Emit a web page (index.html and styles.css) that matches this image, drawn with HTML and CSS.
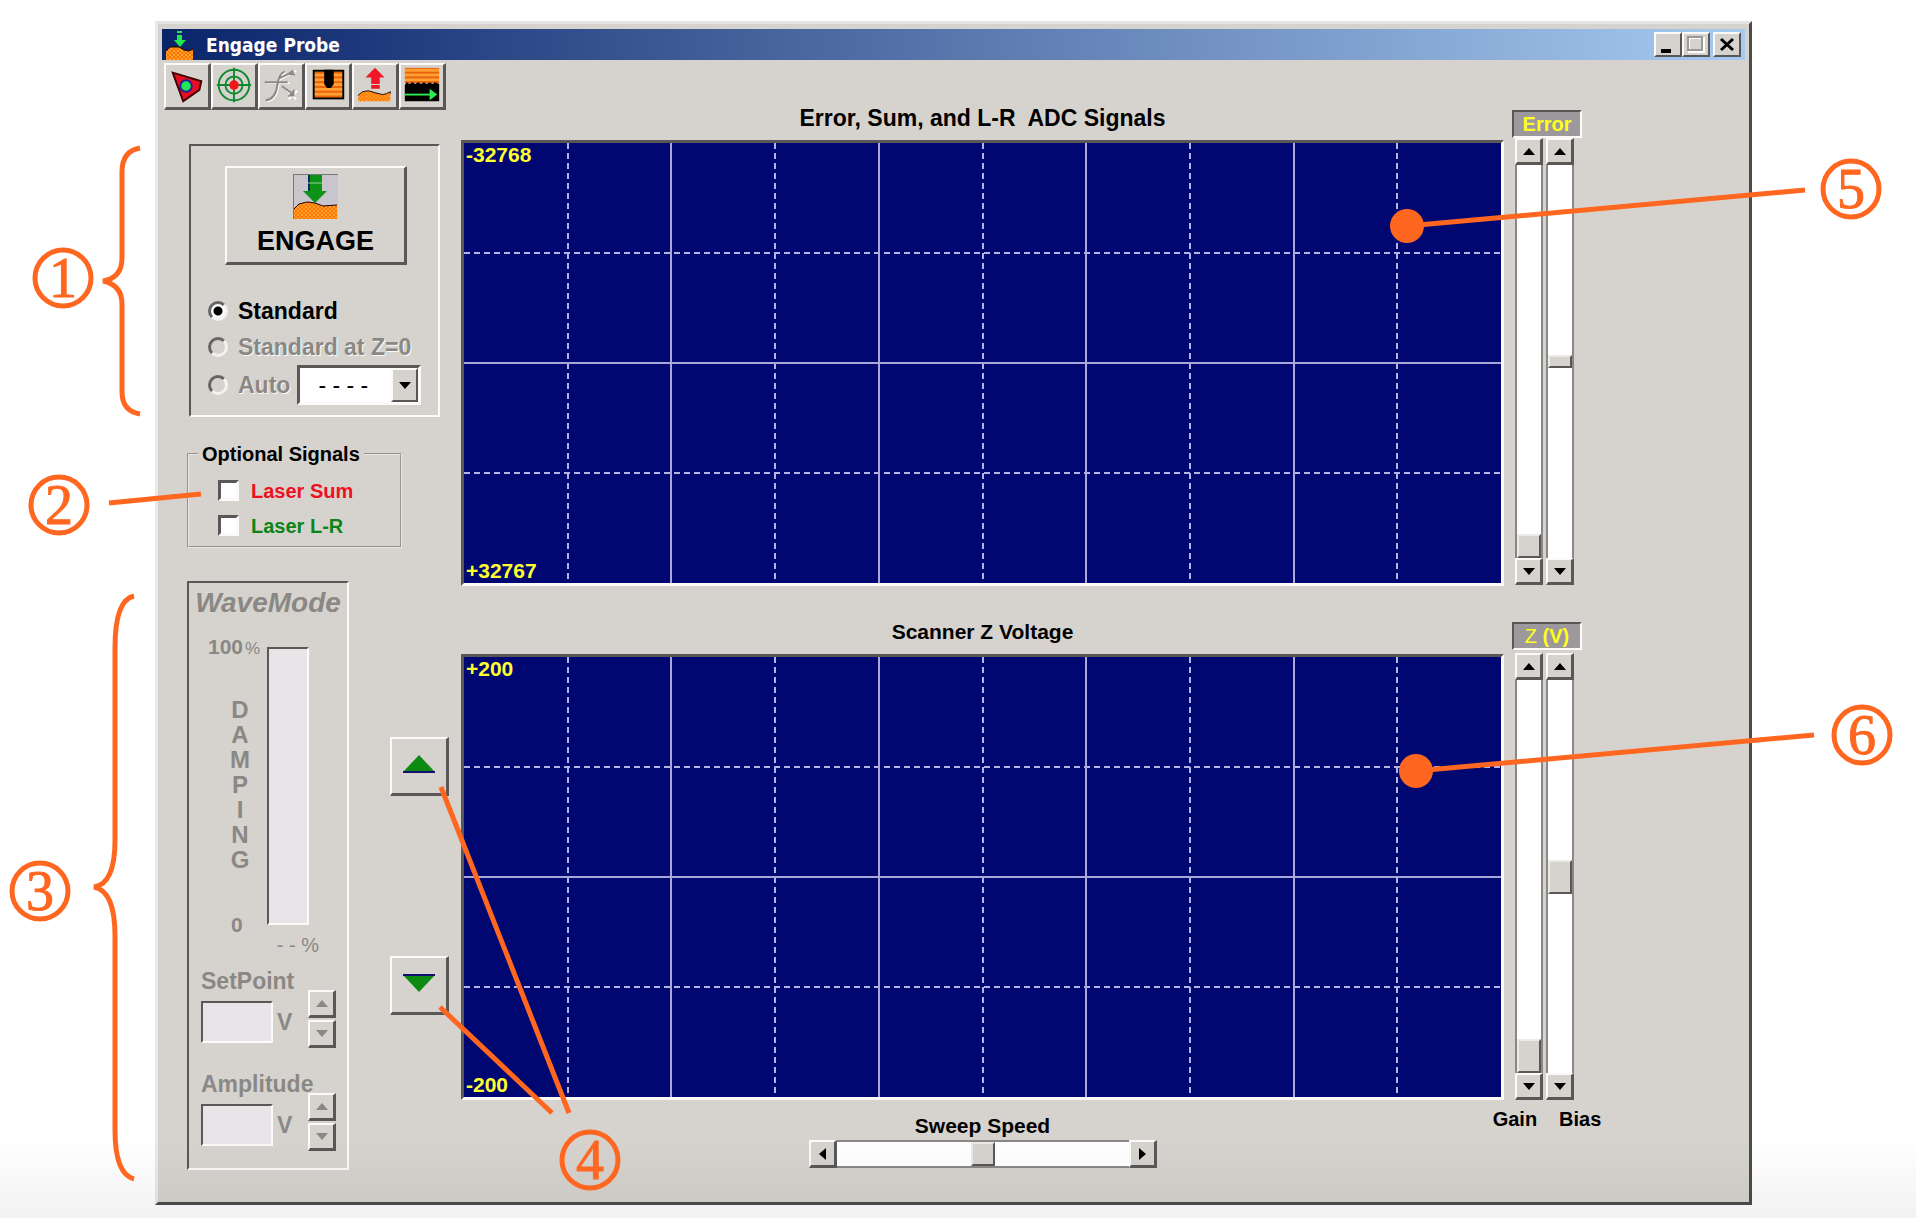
FILE: index.html
```html
<!DOCTYPE html>
<html lang="en">
<head>
<meta charset="utf-8">
<title>Engage Probe</title>
<link rel="stylesheet" href="styles.css">
</head>
<body>
<svg class="defs" aria-hidden="true">
  <defs>
    <pattern id="sand" width="4" height="4" patternUnits="userSpaceOnUse">
      <rect width="4" height="4" fill="#ff7408"/><rect width="2" height="2" fill="#ffa828"/><rect x="2" y="2" width="2" height="2" fill="#ff9a20"/>
    </pattern>
    <pattern id="layers" width="5" height="5" patternUnits="userSpaceOnUse">
      <rect width="5" height="5" fill="#ffa030"/><rect width="5" height="2" y="2" fill="#e86010"/>
    </pattern>
  </defs>
</svg>
<div class="stage">
  <main class="window">
    <header class="titlebar">
      <svg class="app-icon" viewBox="0 0 30 30" aria-hidden="true">
        <path d="M12 1h5v2h-5zM12 5h5v5h4l-6 7-6-7h3z" fill="#20e850"/>
        <path d="M1 21l4-4h9l5 3 5 1 4-2v11H1z" fill="url(#sand)"/>
        <path d="M1 21l4-4h9l5 3 5 1 4-2" fill="none" stroke="#200" stroke-width="1"/>
      </svg>
      <h1>Engage Probe</h1>
      <div class="caption-buttons">
        <button class="raised" aria-label="Minimize"><svg viewBox="0 0 24 22"><path d="M5 15h10v4H5z"/></svg></button>
        <button class="raised" aria-label="Maximize" disabled><svg viewBox="0 0 24 22"><path d="M5 4h15v14H5z" fill="none" stroke="#fff" stroke-width="2"/><path d="M4 3h14v13H4z" fill="none" stroke="#999" stroke-width="2"/></svg></button>
        <button class="raised close" aria-label="Close"><svg viewBox="0 0 24 22"><path d="M6 5l12 11M18 5L6 16" fill="none" stroke="#000" stroke-width="3"/></svg></button>
      </div>
    </header>

    <div class="content">
      <div class="left">
        <nav class="toolbar" aria-label="Tools">
          <button class="raised" aria-label="Probe head"><svg viewBox="0 0 44 44"><path d="M7 8l30 9-2 9-17 12z" fill="#e81020" stroke="#400" stroke-width="2"/><circle cx="21" cy="22" r="6" fill="#20e850" stroke="#2020a0" stroke-width="2"/></svg></button>
          <button class="raised" aria-label="Laser alignment"><svg viewBox="0 0 44 44"><g fill="none" stroke="#108a30" stroke-width="2"><circle cx="22" cy="21" r="16"/><circle cx="22" cy="21" r="9"/><path d="M22 3v36M4 21h36"/></g><circle cx="22" cy="21" r="5" fill="#f01818"/></svg></button>
          <button class="raised" aria-label="Frequency sweep" disabled><svg viewBox="0 0 44 44"><g fill="none" stroke="#fff" stroke-width="2"><path d="M7 38q10-1 12-15t8-15M6 19h25M21 15l17-9M24 22l14 14M30 36l9-9"/></g><g fill="none" stroke="#8a8a8a" stroke-width="2"><path d="M6 37q10-1 12-15t8-15M5 18h24M20 14l15-7M23 22l12 9"/></g><path d="M34 5l3 6-9-1zM36 25v8h-7z" fill="#8a8a8a"/></svg></button>
          <button class="raised" aria-label="Probe depth"><svg viewBox="0 0 44 44"><rect x="7" y="6" width="31" height="29" fill="url(#layers)" stroke="#000" stroke-width="2"/><path d="M18 5h10v15l-3 4h-4l-3-4z" fill="#000"/></svg></button>
          <button class="raised" aria-label="Withdraw"><svg viewBox="0 0 44 44"><path d="M22 3l10 10h-5v7h-9v-7h-6zM18 21h9v4h-9z" fill="#f01828"/><path d="M5 31l4-3 6-1 7 2 8 2 4-1 4-2v10H4z" fill="url(#sand)"/><path d="M4 32l5-4 6-1 7 2 8 2 4-1 4-2v2" fill="none" stroke="#200" stroke-width="1"/></svg></button>
          <button class="raised" aria-label="Scan"><svg viewBox="0 0 44 44"><rect x="4" y="3" width="36" height="16" fill="url(#layers)"/><path d="M4 21l2-3 3 2 3-2 3 2 3-2 3 2 3-2 3 2 3-2 3 2 3-2 4 2v18H4z" fill="#000"/><path d="M4 31h27" stroke="#30e850" stroke-width="2"/><path d="M30 25l8 6-8 6z" fill="#30e850"/></svg></button>
        </nav>

        <section class="sunken engage-panel" aria-label="Engage">
          <button class="raised engage">
            <svg viewBox="0 0 45 45" aria-hidden="true"><rect width="45" height="45" fill="#c9c5cc"/><path d="M0 45V0h45" fill="none" stroke="#777" stroke-width="2"/><path d="M15 1h14v16h5L22 29 10 17h5z" fill="#0d9418"/><path d="M16 1v16" stroke="#0a2a60" stroke-width="2"/><path d="M15 9h14" stroke="#9c9" stroke-width="1"/><path d="M1 34l5-4 8-2 8 1 8 3 14-1v14H1z" fill="url(#sand)"/><path d="M1 35l5-5 8-2 8 1 8 3 14-1" fill="none" stroke="#200" stroke-width="1"/></svg>
            <span>ENGAGE</span>
          </button>
          <div class="modes">
            <label><input type="radio" name="mode" checked>Standard</label>
            <label class="off"><input type="radio" name="mode" disabled>Standard at Z=0</label>
            <div class="auto">
              <label class="off"><input type="radio" name="mode" disabled>Auto</label>
              <span class="combo">
                <select aria-label="Auto engage setting"><option>- - - -</option></select>
                <span class="raised combo-arrow"><svg viewBox="0 0 12 7"><path d="M0 0h12L6 7z"/></svg></span>
              </span>
            </div>
          </div>
        </section>

        <fieldset class="signals">
          <legend>Optional Signals</legend>
          <label class="sum"><input type="checkbox">Laser Sum</label>
          <label class="lr"><input type="checkbox">Laser L-R</label>
        </fieldset>

        <div class="lower">
          <section class="sunken wave">
            <h2>WaveMode</h2>
            <div class="meter-area">
              <div class="scale">
                <span class="top-mark">100<small>%</small></span>
                <span class="damping">DAMPING</span>
                <span class="zero">0</span>
              </div>
              <div class="sunken meter"></div>
            </div>
            <div class="reading">- - %</div>
            <div class="setting">
              <label for="setpoint">SetPoint</label>
              <div class="value"><input class="sunken" id="setpoint" type="text" disabled><span>V</span></div>
              <div class="spin">
                <button class="raised" aria-label="Increase set point" disabled><svg viewBox="0 0 12 7"><path d="M0 7h12L6 0z"/></svg></button>
                <button class="raised" aria-label="Decrease set point" disabled><svg viewBox="0 0 12 7"><path d="M0 0h12L6 7z"/></svg></button>
              </div>
            </div>
            <div class="setting">
              <label for="amplitude">Amplitude</label>
              <div class="value"><input class="sunken" id="amplitude" type="text" disabled><span>V</span></div>
              <div class="spin">
                <button class="raised" aria-label="Increase amplitude" disabled><svg viewBox="0 0 12 7"><path d="M0 7h12L6 0z"/></svg></button>
                <button class="raised" aria-label="Decrease amplitude" disabled><svg viewBox="0 0 12 7"><path d="M0 0h12L6 7z"/></svg></button>
              </div>
            </div>
          </section>
          <div class="nudge">
            <button class="raised" aria-label="Move up"><svg viewBox="0 0 32 18"><path d="M16 0l16 17H0z" fill="#0d8a12"/><path d="M0 17h32" stroke="#101070" stroke-width="2"/></svg></button>
            <button class="raised" aria-label="Move down"><svg viewBox="0 0 32 18"><path d="M0 1h32L16 18z" fill="#0d8a12"/><path d="M0 1h32" stroke="#101070" stroke-width="2"/></svg></button>
          </div>
        </div>
      </div>

      <div class="plots">
        <h2 class="wide">Error, Sum, and L-R&nbsp; ADC Signals</h2>
        <div class="plot">
          <svg aria-hidden="true">
            <g class="dashed"><line x1="10%" x2="10%" y2="100%"/><line x1="30%" x2="30%" y2="100%"/><line x1="50%" x2="50%" y2="100%"/><line x1="70%" x2="70%" y2="100%"/><line x1="90%" x2="90%" y2="100%"/><line y1="25%" y2="25%" x2="100%"/><line y1="75%" y2="75%" x2="100%"/></g>
            <g class="solid"><line x1="20%" x2="20%" y2="100%"/><line x1="40%" x2="40%" y2="100%"/><line x1="60%" x2="60%" y2="100%"/><line x1="80%" x2="80%" y2="100%"/><line y1="50%" y2="50%" x2="100%"/></g>
          </svg>
          <span>-32768</span><span>+32767</span>
        </div>
        <h2>Scanner Z Voltage</h2>
        <div class="plot">
          <svg aria-hidden="true">
            <g class="dashed"><line x1="10%" x2="10%" y2="100%"/><line x1="30%" x2="30%" y2="100%"/><line x1="50%" x2="50%" y2="100%"/><line x1="70%" x2="70%" y2="100%"/><line x1="90%" x2="90%" y2="100%"/><line y1="25%" y2="25%" x2="100%"/><line y1="75%" y2="75%" x2="100%"/></g>
            <g class="solid"><line x1="20%" x2="20%" y2="100%"/><line x1="40%" x2="40%" y2="100%"/><line x1="60%" x2="60%" y2="100%"/><line x1="80%" x2="80%" y2="100%"/><line y1="50%" y2="50%" x2="100%"/></g>
          </svg>
          <span>+200</span><span>-200</span>
        </div>
        <div class="sweep">
          <label for="sweep">Sweep Speed</label>
          <div class="scroll across">
            <button class="raised" aria-label="Slower"><svg viewBox="0 0 7 12"><path d="M7 0v12L0 6z"/></svg></button>
            <input id="sweep" type="range" value="50">
            <button class="raised" aria-label="Faster"><svg viewBox="0 0 7 12"><path d="M0 0v12l7-6z"/></svg></button>
          </div>
        </div>
      </div>

      <div class="levels">
        <div class="sunken tag">Error</div>
        <div class="pair">
          <div class="scroll">
            <button class="raised" aria-label="Error gain up"><svg viewBox="0 0 12 7"><path d="M0 7h12L6 0z"/></svg></button>
            <input class="thumb-24" type="range" value="0" aria-label="Error gain">
            <button class="raised" aria-label="Error gain down"><svg viewBox="0 0 12 7"><path d="M0 0h12L6 7z"/></svg></button>
          </div>
          <div class="scroll">
            <button class="raised" aria-label="Error bias up"><svg viewBox="0 0 12 7"><path d="M0 7h12L6 0z"/></svg></button>
            <input class="thumb-13" type="range" value="50" aria-label="Error bias">
            <button class="raised" aria-label="Error bias down"><svg viewBox="0 0 12 7"><path d="M0 0h12L6 7z"/></svg></button>
          </div>
        </div>
        <div class="sunken tag z">Z <b>(V)</b></div>
        <div class="pair">
          <div class="scroll">
            <button class="raised" aria-label="Z gain up"><svg viewBox="0 0 12 7"><path d="M0 7h12L6 0z"/></svg></button>
            <input class="thumb-34" id="gain" type="range" value="0">
            <button class="raised" aria-label="Z gain down"><svg viewBox="0 0 12 7"><path d="M0 0h12L6 7z"/></svg></button>
          </div>
          <div class="scroll">
            <button class="raised" aria-label="Z bias up"><svg viewBox="0 0 12 7"><path d="M0 7h12L6 0z"/></svg></button>
            <input class="thumb-34" id="bias" type="range" value="50">
            <button class="raised" aria-label="Z bias down"><svg viewBox="0 0 12 7"><path d="M0 0h12L6 7z"/></svg></button>
          </div>
        </div>
        <div class="names"><label for="gain">Gain</label><label for="bias">Bias</label></div>
      </div>
    </div>
  </main>

  <svg class="callouts" viewBox="0 0 1916 1218" role="img" aria-label="Numbered callouts">
    <g class="strokes">
      <path d="M140 148Q122 151 122 172V258Q122 278 103 281Q122 285 122 304V392Q122 411 140 414"/>
      <path d="M134 596Q115 600 115 648V840Q115 884 94 887Q115 891 115 936V1130Q115 1174 134 1179"/>
      <path d="M109 503L201 494M441 787L569 1113M440 1007L552 1113M1407 226L1805 190M1416 771L1814 735"/>
      <circle cx="63" cy="278" r="28"/><circle cx="59" cy="505" r="28"/><circle cx="40" cy="891" r="28"/>
      <circle cx="590" cy="1160" r="28"/><circle cx="1851" cy="189" r="28"/><circle cx="1862" cy="735" r="28"/>
    </g>
    <g class="dots"><circle cx="1407" cy="226" r="17"/><circle cx="1416" cy="771" r="17"/></g>
    <g class="digits">
      <text x="63" y="297">1</text><text x="59" y="524">2</text><text x="40" y="910">3</text>
      <text x="590" y="1179">4</text><text x="1851" y="208">5</text><text x="1862" y="754">6</text>
    </g>
  </svg>
</div>
</body>
</html>
```
FILE: styles.css
```css
:root {
  --face: #d6d3ce;
  --shadow: #5a5856;
  --light: #fbfaf8;
  --muted: #8a8885;
  --navy: #000770;
  --mark: #ff6720;
}

* { box-sizing: border-box; }

body {
  margin: 0;
  background: #fff;
  color: #000;
  font: bold 20px/24px "Liberation Sans", Arial, sans-serif;
}

.defs { position: absolute; width: 0; height: 0; }

.stage {
  position: relative;
  display: flex;
  min-height: 100vh;
  padding: 21px 164px 13px 155px;
}

/* soft shade along the foot of the page */
.stage::after {
  content: "";
  position: absolute;
  inset: auto 0 0 0;
  height: 80px;
  background: linear-gradient(transparent, rgba(0, 0, 0, .05));
  pointer-events: none;
}

h1, h2 { margin: 0; font: inherit; }
button { padding: 0; color: inherit; font: inherit; }
svg { display: block; }

.raised {
  display: flex;
  align-items: center;
  justify-content: center;
  border: 2px solid;
  border-color: var(--light) var(--shadow) var(--shadow) var(--light);
  border-radius: 0;
  background: var(--face);
}

.sunken {
  border: 2px solid;
  border-color: var(--shadow) var(--light) var(--light) var(--shadow);
}

.window {
  flex: 1;
  display: flex;
  flex-direction: column;
  padding: 5px 4px 0;
  border: 3px solid;
  border-color: #e6e4e0 #4c4a4a #4c4a4a #ebe9e5;
  background: var(--face);
}

.titlebar {
  display: flex;
  align-items: center;
  height: 31px;
  padding: 0 4px 0 3px;
  background: linear-gradient(90deg, #0a246a, #a6caf0);
  color: #fff;
}
.app-icon { width: 30px; height: 30px; margin-right: 11px; }
.titlebar h1 { flex: 1; font-family: "DejaVu Sans Condensed", "Open Sans", sans-serif; font-size: 19px; }
.caption-buttons { display: flex; }
.caption-buttons button { width: 28px; height: 25px; }
.caption-buttons svg { width: 24px; height: 22px; }
.caption-buttons .close { margin-left: 3px; }

.content {
  flex: 1;
  display: grid;
  grid-template-columns: 299px minmax(400px, 1fr) 70px;
  padding-right: 163px;
}

.left { display: flex; flex-direction: column; align-items: flex-start; }

.toolbar { display: flex; margin: 3px 0 34px 2px; }
.toolbar button {
  width: 47px;
  height: 47px;
  border-right-width: 3px;
  border-bottom-width: 3px;
}
.toolbar svg { width: 42px; height: 42px; }

.engage-panel {
  width: 251px;
  height: 273px;
  margin-left: 27px;
  padding: 20px 17px 0;
  font-size: 23px;
}
.engage {
  flex-direction: column;
  width: 182px;
  height: 99px;
  margin: 0 0 28px 17px;
  border-right-width: 3px;
  border-bottom-width: 3px;
  font-size: 27px;
  line-height: 32px;
}
.engage svg { width: 45px; height: 45px; margin-bottom: 6px; }

.modes label { display: flex; align-items: center; gap: 10px; height: 36px; white-space: nowrap; }
.off { color: var(--muted); text-shadow: 1px 1px var(--light); }
.auto { display: flex; align-items: center; gap: 7px; height: 40px; }

input[type="radio"] {
  appearance: none;
  width: 20px;
  height: 20px;
  margin: 0;
  border: 3px solid;
  border-color: #666 #f4f2f0 #f4f2f0 #666;
  border-radius: 50%;
  background: var(--face);
}
input[type="radio"]:checked { background: radial-gradient(circle, #000 4px, #fff 5px); }

.combo { position: relative; width: 124px; height: 40px; }
.combo select {
  appearance: none;
  width: 124px;
  height: 40px;
  padding: 0 0 0 18px;
  border: 3px solid;
  border-color: var(--shadow) var(--light) var(--light) var(--shadow);
  border-radius: 0;
  background: #fff;
  color: #000;
  font: normal 23px "Liberation Sans", Arial, sans-serif;
}
.combo-arrow {
  position: absolute;
  inset: 3px 3px 3px auto;
  width: 27px;
  pointer-events: none;
}
.combo-arrow svg { width: 12px; height: 7px; }

.signals {
  width: 215px;
  margin: 25px 0 33px 25px;
  padding: 7px 0 3px 29px;
  border: 2px groove #e8e6e2;
}
.signals legend { margin-left: -20px; padding: 0 4px; white-space: nowrap; }
.signals label { display: flex; align-items: center; gap: 12px; height: 35px; }
.sum { color: #ee1020; }
.lr { color: #0d8418; }
input[type="checkbox"] {
  appearance: none;
  width: 21px;
  height: 21px;
  margin: 0;
  border: 3px solid;
  border-color: var(--shadow) var(--light) var(--light) var(--shadow);
  background: #fff;
}

.lower { display: flex; margin-left: 25px; }
.wave {
  width: 162px;
  padding-bottom: 17px;
  color: var(--muted);
  font-size: 23px;
}
.wave h2 { font-size: 28px; font-style: italic; line-height: 40px; text-align: center; }
.meter-area { display: flex; height: 302px; margin-top: 12px; }
.scale {
  display: flex;
  flex-direction: column;
  justify-content: space-between;
  width: 78px;
  padding-left: 19px;
  font-size: 21px;
}
.scale small { padding-left: 2px; font-size: 17px; font-weight: normal; }
.damping {
  width: 20px;
  margin: 0 0 6px 22px;
  font-size: 24px;
  line-height: 25px;
  overflow-wrap: anywhere;
  text-align: center;
}
.zero { margin-left: 23px; }
.meter { width: 42px; margin: 12px 0; background: #e8e4e8; }
.reading { padding-right: 28px; font-size: 20px; font-weight: normal; line-height: 16px; text-align: right; }

.setting {
  display: grid;
  grid-template: 28px 53px / 1fr 28px;
  margin-top: 14px;
  padding: 0 11px 0 12px;
}
.setting + .setting { margin-top: 21px; padding-top: 1px; }
.setting > label { grid-area: 1 / 1 / 2 / 3; line-height: 28px; white-space: nowrap; }
.value { grid-row: 2; display: flex; align-items: center; gap: 4px; }
.value input { width: 72px; height: 42px; background: #e8e4e8; }
.spin { grid-area: 1 / 2 / 3 / 3; align-self: end; display: flex; flex-direction: column; gap: 2px; }
.spin button { width: 28px; height: 28px; border-right-width: 3px; border-bottom-width: 3px; }
.spin svg { width: 12px; height: 7px; fill: var(--muted); }

.nudge { display: flex; flex-direction: column; gap: 160px; margin: 156px 0 0 41px; }
.nudge button { width: 59px; height: 59px; padding-bottom: 4px; border-right-width: 3px; border-bottom-width: 3px; }
.nudge svg { width: 32px; height: 18px; }

.plots {
  display: grid;
  grid-template-rows: 80px minmax(300px, 1fr) 68px minmax(300px, 1fr) 102px;
  margin-right: 8px;
}
.plots h2 { align-self: end; padding-bottom: 10px; font-size: 21px; text-align: center; }
.plots .wide { font-size: 23px; }

.plot {
  position: relative;
  display: flex;
  flex-direction: column;
  justify-content: space-between;
  border: 3px solid;
  border-color: var(--shadow) var(--light) var(--light) var(--shadow);
  background: var(--navy);
  color: #ffff30;
  font-size: 21px;
}
.plot svg { position: absolute; inset: 0; width: 100%; height: 100%; }
.plot span { position: relative; padding-left: 2px; }
.dashed, .solid { shape-rendering: crispEdges; }
.dashed { stroke: #b4b4e4; stroke-width: 2; stroke-dasharray: 6 4; }
.solid { stroke: #a8a8d8; stroke-width: 2; }

.sweep { display: flex; flex-direction: column; align-items: center; gap: 2px; padding-top: 14px; font-size: 21px; }

.levels {
  display: grid;
  grid-template-columns: minmax(0, 1fr);
  grid-template-rows: 78px minmax(300px, 1fr) 68px minmax(300px, 1fr) 102px;
}
.tag {
  align-self: end;
  height: 28px;
  background: #9c989c;
  color: #ffff20;
  text-align: center;
}
.z { margin-bottom: 3px; font-weight: normal; }
.pair { display: flex; gap: 3px; margin-left: 3px; }

.scroll { display: flex; flex-direction: column; width: 28px; background: #fff; }
.scroll button { flex: none; width: 28px; height: 27px; border-right-width: 3px; border-bottom-width: 3px; }
.scroll svg { width: 12px; height: 7px; }
.scroll input {
  appearance: none;
  flex: 1;
  width: 28px;
  min-height: 0;
  margin: 0;
  border: solid #8a8886;
  border-width: 0 2px;
  background: #fff;
  direction: rtl;
  writing-mode: vertical-lr;
}
.scroll input::-webkit-slider-thumb {
  appearance: none;
  width: 24px;
  height: 24px;
  border: 2px solid;
  border-color: #eceae6 var(--shadow) var(--shadow) #eceae6;
  border-radius: 0;
  background: var(--face);
}
.scroll .thumb-13::-webkit-slider-thumb { height: 13px; }
.scroll .thumb-34::-webkit-slider-thumb { height: 34px; }

.across { flex-direction: row; width: 348px; height: 28px; }
.across button { height: 28px; }
.across svg { width: 7px; height: 12px; }
.across input {
  min-width: 0;
  height: 28px;
  border-width: 2px 0;
  direction: ltr;
  writing-mode: horizontal-tb;
}

.names { display: flex; justify-content: center; gap: 22px; padding-top: 7px; }
.names label { flex: none; }

.callouts { position: absolute; top: 0; left: 0; width: 100%; pointer-events: none; z-index: 1; }
.strokes { fill: none; stroke: var(--mark); stroke-width: 5; }
.dots, .digits { fill: var(--mark); }
.digits {
  stroke: var(--mark);
  stroke-width: 1;
  font: normal 56px "Liberation Serif", "Times New Roman", serif;
  text-anchor: middle;
}
```
